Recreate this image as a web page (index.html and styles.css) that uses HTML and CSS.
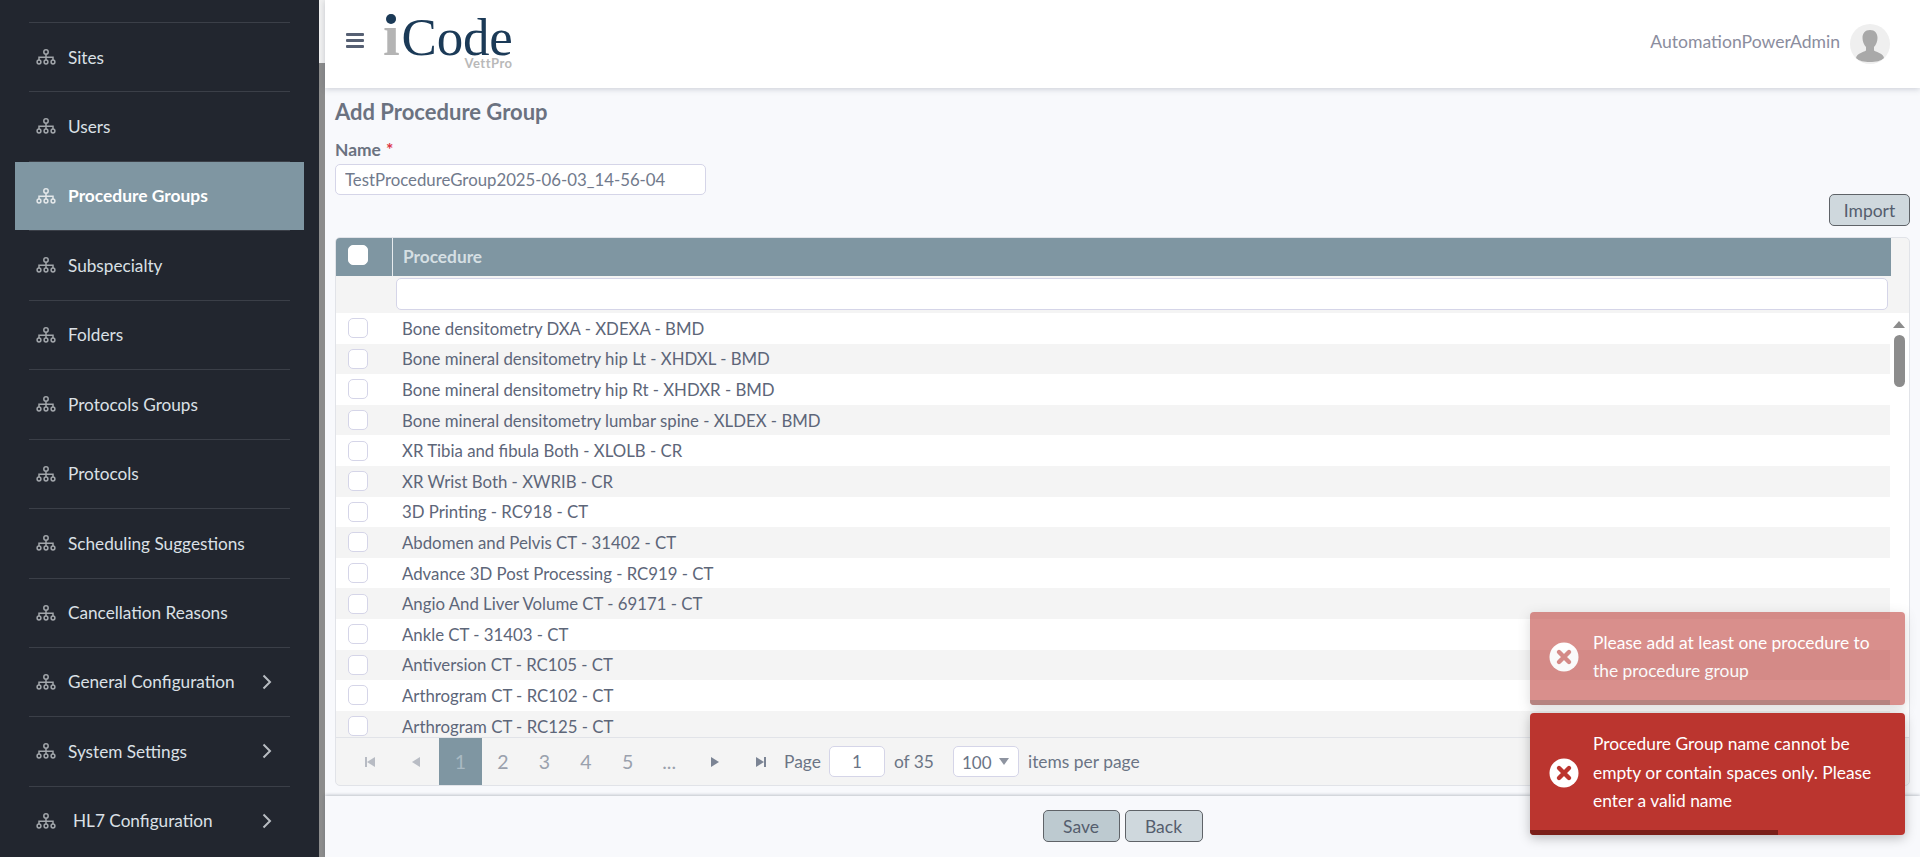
FILE: index.html
```html
<!DOCTYPE html>
<html lang="en">
<head>
  <meta charset="UTF-8">
  <title>Add Procedure Group - iCode VettPro</title>
  <link rel="stylesheet" href="styles.css">
</head>
<body>

  <svg class="defs" width="0" height="0">
    <symbol id="tree" viewBox="0 0 20 16">
      <g fill="none" stroke="currentColor" stroke-width="1.5">
        <circle cx="10" cy="3" r="2.2"/>
        <path d="M10 5.2V9M3 11V8.2H17V11M10 8.2V11"/>
        <circle cx="3" cy="13" r="1.9"/>
        <circle cx="10" cy="13" r="1.9"/>
        <circle cx="17" cy="13" r="1.9"/>
      </g>
    </symbol>
    <symbol id="chev" viewBox="0 0 10 16">
      <path d="M1.5 1.5L8 8L1.5 14.5" fill="none" stroke="currentColor" stroke-width="2"/>
    </symbol>
    <symbol id="err" viewBox="0 0 30 30">
      <circle cx="15" cy="15" r="14.5" fill="#fff"/>
      <path d="M10 10L20 20M20 10L10 20" fill="none" stroke="#bb352f" stroke-width="4.4" stroke-linecap="round"/>
    </symbol>
  </svg>

  <div class="sidebar">
    <ul class="menu">
      <li><a><svg class="ico"><use href="#tree"/></svg>Sites</a></li>
      <li><a><svg class="ico"><use href="#tree"/></svg>Users</a></li>
      <li class="active"><a><svg class="ico"><use href="#tree"/></svg>Procedure Groups</a></li>
      <li><a><svg class="ico"><use href="#tree"/></svg>Subspecialty</a></li>
      <li><a><svg class="ico"><use href="#tree"/></svg>Folders</a></li>
      <li><a><svg class="ico"><use href="#tree"/></svg>Protocols Groups</a></li>
      <li><a><svg class="ico"><use href="#tree"/></svg>Protocols</a></li>
      <li><a><svg class="ico"><use href="#tree"/></svg>Scheduling Suggestions</a></li>
      <li><a><svg class="ico"><use href="#tree"/></svg>Cancellation Reasons</a></li>
      <li><a><svg class="ico"><use href="#tree"/></svg>General Configuration<svg class="chev"><use href="#chev"/></svg></a></li>
      <li><a><svg class="ico"><use href="#tree"/></svg>System Settings<svg class="chev"><use href="#chev"/></svg></a></li>
      <li><a class="hl7"><svg class="ico"><use href="#tree"/></svg>HL7 Configuration<svg class="chev"><use href="#chev"/></svg></a></li>
    </ul>
  </div>
  <div class="side-scroll"><div class="side-thumb"></div></div>

  <div class="page">
    <div class="topbar">
      <div class="burger"><span></span><span></span><span></span></div>
      <div class="logo"><span class="logo-i">i</span>Code<small>VettPro</small></div>
      <div class="user">
        <span class="user-name">AutomationPowerAdmin</span>
        <div class="avatar">
          <svg viewBox="0 0 40 40" width="40" height="40">
            <path d="M20 6c-5 0-7.500 3.500-7.500 8 0 3.500 1.500 7 3.500 9v3.500c-3 2-9 2.500-10 7.500 3 3 8 4 14 4s11-1 14-4c-1-5-7-5.500-10-7.500V23c2-2 3.500-5.500 3.500-9 0-4.500-2.500-8-7.500-8z" fill="#a9a9a9"/>
          </svg>
        </div>
      </div>
    </div>

    <div class="content">
      <h2>Add Procedure Group</h2>
      <label class="name-label" for="name">Name <span class="req">*</span></label>
      <input class="name-input" id="name" type="text" value="TestProcedureGroup2025-06-03_14-56-04">
      <div class="import-row"><button class="btn btn-import">Import</button></div>

      <div class="grid">
        <div class="grid-head">
          <div class="cell-check"><span class="check head-check"></span></div>
          <div class="head-title">Procedure</div>
        </div>
        <div class="grid-filter"><input type="text"></div>
        <div class="grid-body">
          <div class="rows">
            <div class="row"><span class="check"></span>Bone densitometry DXA - XDEXA - BMD</div>
            <div class="row"><span class="check"></span>Bone mineral densitometry hip Lt - XHDXL - BMD</div>
            <div class="row"><span class="check"></span>Bone mineral densitometry hip Rt - XHDXR - BMD</div>
            <div class="row"><span class="check"></span>Bone mineral densitometry lumbar spine - XLDEX - BMD</div>
            <div class="row"><span class="check"></span>XR Tibia and fibula Both - XLOLB - CR</div>
            <div class="row"><span class="check"></span>XR Wrist Both - XWRIB - CR</div>
            <div class="row"><span class="check"></span>3D Printing - RC918 - CT</div>
            <div class="row"><span class="check"></span>Abdomen and Pelvis CT - 31402 - CT</div>
            <div class="row"><span class="check"></span>Advance 3D Post Processing - RC919 - CT</div>
            <div class="row"><span class="check"></span>Angio And Liver Volume CT - 69171 - CT</div>
            <div class="row"><span class="check"></span>Ankle CT - 31403 - CT</div>
            <div class="row"><span class="check"></span>Antiversion CT - RC105 - CT</div>
            <div class="row"><span class="check"></span>Arthrogram CT - RC102 - CT</div>
            <div class="row"><span class="check"></span>Arthrogram CT - RC125 - CT</div>
          </div>
          <div class="vscroll"><div class="arrow-up"></div><div class="vthumb"></div></div>
        </div>
        <div class="pager">
          <span class="pg-btn"><i class="bar"></i><i class="tri-l"></i></span>
          <span class="pg-btn"><i class="tri-l"></i></span>
          <span class="pg-num current">1</span>
          <span class="pg-num">2</span>
          <span class="pg-num">3</span>
          <span class="pg-num">4</span>
          <span class="pg-num">5</span>
          <span class="pg-num">...</span>
          <span class="pg-btn dark pg-next"><i class="tri-r"></i></span>
          <span class="pg-btn dark"><i class="tri-r"></i><i class="bar"></i></span>
          <span class="pg-label">Page</span>
          <input class="pg-input" type="text" value="1">
          <span class="pg-of">of 35</span>
          <span class="pg-select">100<i class="tri-d"></i></span>
          <span class="pg-items">items per page</span>
        </div>
      </div>
    </div>

    <div class="footer">
      <button class="btn btn-save">Save</button>
      <button class="btn">Back</button>
    </div>
  </div>

  <div class="toasts">
    <div class="toast faded">
      <svg class="toast-ico"><use href="#err"/></svg>
      <div>Please add at least one procedure to the procedure group</div>
      <div class="progress" style="width: 96%"></div>
    </div>
    <div class="toast">
      <svg class="toast-ico"><use href="#err"/></svg>
      <div>Procedure Group name cannot be empty or contain spaces only. Please enter a valid name</div>
      <div class="progress" style="width: 66%"></div>
    </div>
  </div>

</body>
</html>
```

FILE: styles.css
```css
* {
  box-sizing: border-box;
}
html, body {
  height: 100%;
}
body {
  margin: 0;
  display: flex;
  height: 857px;
  overflow: hidden;
  font-family: Lato, "Open Sans", sans-serif;
  font-size: 16px;
  color: #5d6679;
  background-color: #f8f9fc;
}
.defs {
  position: absolute;
}

/* sidebar */
.sidebar {
  width: 319px;
  flex: none;
  background-color: #22262f;
  padding: 22px 29px 0;
  overflow: hidden;
}
.menu {
  list-style: none;
  margin: 0;
  padding: 0;
}
.menu li {
  height: 69.45px;
  border-top: 1px solid #3b3f48;
}
.menu a {
  display: flex;
  align-items: center;
  height: 68px;
  padding-left: 7px;
  color: #dbe0e6;
  font-size: 17.2px;
}
.menu .active {
  border-bottom: 2px solid #3b3f48;
}
.menu .active a {
  margin: 0 -14px;
  padding-left: 21px;
  background-color: #7f96a2;
  color: #fff;
  font-weight: bold;
  font-size: 17.4px;
}
.menu .active .ico {
  color: #e4e8ea;
}
.menu .hl7 {
  gap: 5px;
}
.ico {
  width: 20px;
  height: 16px;
  flex: none;
  margin-right: 12px;
  color: #a2a6ab;
}
.chev {
  width: 10px;
  height: 16px;
  margin-left: auto;
  margin-right: 18px;
  color: #b8bcc2;
}
.side-scroll {
  width: 6px;
  flex: none;
  background-color: #f1f1f1;
}
.side-thumb {
  margin-top: 63px;
  height: 794px;
  background-color: #8c8c8c;
}

/* main area */
.page {
  flex: 1;
  min-width: 0;
  display: flex;
  flex-direction: column;
}
.topbar {
  height: 88px;
  flex: none;
  display: flex;
  align-items: center;
  padding: 0 30px 0 21px;
  background-color: #fff;
  box-shadow: 0 1px 6px rgba(60, 70, 90, 0.25);
  position: relative;
}
.burger {
  width: 18px;
  margin-right: 19px;
  margin-top: -4px;
}
.burger span {
  display: block;
  height: 3px;
  margin-bottom: 3px;
  background-color: #566073;
  border-radius: 1px;
}
.logo {
  position: relative;
  font-family: "Liberation Serif", serif;
  font-size: 53px;
  line-height: 1;
  letter-spacing: -0.2px;
  color: #1b3a57;
  margin-top: -19px;
}
.logo-i {
  position: relative;
  font-size: 60px;
  font-weight: bold;
  margin-right: 2px;
  color: #b4b4b4;
}
.logo-i::after {
  content: "";
  position: absolute;
  left: 3px;
  top: 12px;
  width: 10px;
  height: 10px;
  border-radius: 50%;
  background-color: #1b3a57;
}
.logo small {
  position: absolute;
  right: 0;
  bottom: -5px;
  font-family: Lato, sans-serif;
  font-size: 13px;
  font-weight: bold;
  letter-spacing: 0.5px;
  color: #b9b9b9;
}
.user {
  margin-left: auto;
  display: flex;
  align-items: center;
  gap: 10px;
  font-size: 17.6px;
  color: #8b8d9e;
}
.user-name {
  margin-top: -5px;
}
.avatar {
  width: 40px;
  height: 40px;
  border-radius: 50%;
  background-color: #efefef;
  overflow: hidden;
}
.content {
  flex: 1;
  padding: 11px 10px 0;
}
h2 {
  margin: 0;
  font-size: 22px;
  line-height: 26px;
  color: #6b7280;
}
.name-label {
  display: block;
  margin-top: 15px;
  font-size: 17.4px;
  line-height: 20px;
  font-weight: bold;
  color: #6b7280;
}
.req {
  margin-left: 1px;
  color: #dc3545;
}
input {
  font-family: inherit;
  color: inherit;
  border: 1px solid #d5d5e8;
  border-radius: 5px;
  background-color: #fff;
}
.name-input {
  display: block;
  width: 371px;
  height: 31px;
  margin-top: 4px;
  padding: 0 9px;
  font-size: 16.8px;
  color: #717a8c;
}
.import-row {
  display: flex;
  justify-content: flex-end;
  height: 42px;
}
.btn {
  font-family: inherit;
  font-size: 17.5px;
  color: #555e6e;
  height: 32px;
  width: 80px;
  padding: 0;
  background-color: #cfd8dd;
  border: 1px solid #5f6368;
  border-radius: 5px;
}
.btn-import {
  width: 81px;
  margin-top: -1px;
}

/* procedure grid */
.grid {
  height: 549px;
  border: 1px solid #e1e3e8;
  border-radius: 5px;
  background-color: #f4f4f4;
  overflow: hidden;
}
.grid-head {
  display: flex;
  height: 38px;
  margin-right: 18px;
  background-color: #7f96a2;
}
.cell-check {
  width: 57px;
  flex: none;
  display: flex;
  align-items: center;
  border-right: 1px solid #e6ebee;
  padding: 0 0 4px 12px;
}
.head-title {
  padding-left: 10px;
  line-height: 38px;
  font-size: 17.3px;
  font-weight: bold;
  color: #d5dfe3;
}
.grid-filter {
  height: 37px;
  padding: 2px 21px 0 60px;
}
.grid-filter input {
  display: block;
  width: 100%;
  height: 32px;
}
.grid-body {
  display: flex;
  height: 424px;
  background-color: #fff;
}
.rows {
  flex: 1;
  overflow: hidden;
}
.row {
  display: flex;
  align-items: center;
  height: 30.6px;
  font-size: 16.8px;
  color: #5d6679;
}
.row:nth-child(even) {
  background-color: #f4f4f4;
}
.check {
  flex: none;
  width: 20px;
  height: 20px;
  margin: 0 34px 0 12px;
  border: 1px solid #d5d5e8;
  border-radius: 5px;
  background-color: #fff;
}
.head-check {
  margin: 0;
  border-color: #fff;
}
.vscroll {
  width: 19px;
  flex: none;
  padding-top: 8px;
}
.arrow-up {
  width: 0;
  margin-left: 3px;
  border: 6.5px solid transparent;
  border-top: 0;
  border-bottom: 7px solid #8c8c8c;
}
.vthumb {
  width: 11px;
  height: 52px;
  margin: 7px 0 0 4px;
  border-radius: 6px;
  background-color: #8c8c8c;
}
.pager {
  display: flex;
  align-items: center;
  height: 48px;
  padding-left: 11px;
  border-top: 1px solid #e1e3e8;
  font-size: 17.4px;
  color: #6b7485;
}
.pg-btn {
  width: 46px;
  display: flex;
  justify-content: center;
  align-items: center;
  opacity: 0.5;
}
.pg-btn.dark {
  opacity: 1;
}
.pg-next {
  margin-left: 2px;
}
.pg-btn i {
  display: block;
}
.bar {
  width: 2px;
  height: 10px;
  background-color: #7b8494;
}
.tri-l {
  border: 5px solid transparent;
  border-left: 0;
  border-right: 8px solid #7b8494;
}
.tri-r {
  border: 5px solid transparent;
  border-right: 0;
  border-left: 8px solid #7b8494;
}
.pg-num {
  width: 41.6px;
  height: 47px;
  line-height: 47px;
  text-align: center;
  font-size: 19.5px;
  color: #9aa1ad;
}
.pg-num.current {
  width: 43px;
  background-color: #7f96a2;
  color: #a9bac3;
}
.pg-input {
  width: 56px;
  height: 31px;
  margin-left: 8px;
  text-align: center;
  font-size: 17px;
}
.pg-of {
  margin-left: 9px;
}
.pg-select {
  position: relative;
  width: 66px;
  height: 31px;
  line-height: 31px;
  margin-left: 19px;
  padding-left: 8px;
  font-size: 17px;
  border: 1px solid #d5d5e8;
  border-radius: 5px;
  background-color: #fff;
}
.tri-d {
  position: absolute;
  right: 9px;
  top: 11px;
  border: 5px solid transparent;
  border-bottom: 0;
  border-top: 7px solid #8e94a0;
}
.pg-items {
  margin-left: 9px;
}
.footer {
  height: 61px;
  flex: none;
  display: flex;
  justify-content: center;
  gap: 5px;
  padding-top: 14px;
  background-color: #f8f9fc;
  box-shadow: 0 -1px 3px rgba(60, 70, 90, 0.3);
  position: relative;
}
.footer .btn {
  width: 78px;
}
.footer .btn-save {
  width: 77px;
  background-color: #bdcad0;
}

/* toasts */
.toasts {
  position: absolute;
  right: 15px;
  bottom: 22px;
  width: 375px;
  display: flex;
  flex-direction: column;
  gap: 8px;
}
.toast {
  position: relative;
  display: flex;
  align-items: center;
  gap: 14px;
  padding: 17px 30px 20px 19px;
  font-size: 17.4px;
  line-height: 28.2px;
  color: #fff;
  background-color: #bb352f;
  border-radius: 4px;
  box-shadow: 0 3px 12px rgba(0, 0, 0, 0.25);
  overflow: hidden;
}
.toast.faded {
  opacity: 0.55;
}
.toast-ico {
  width: 30px;
  height: 30px;
  flex: none;
}
.progress {
  position: absolute;
  left: 0;
  bottom: 0;
  height: 5px;
  background-color: #7a1f19;
}
```
